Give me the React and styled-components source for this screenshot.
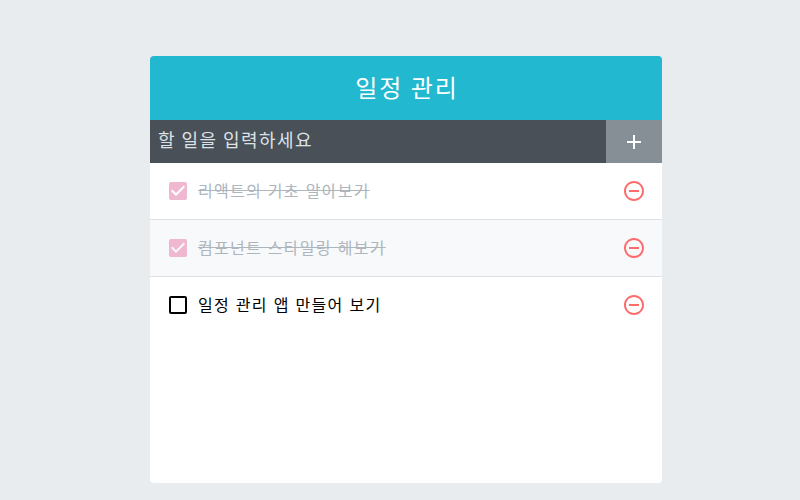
import React from 'react';
import styled, { createGlobalStyle } from 'styled-components';
import { MdAdd, MdCheckBox, MdCheckBoxOutlineBlank, MdRemoveCircleOutline } from 'react-icons/md';

const GlobalStyle = createGlobalStyle`
    body {
        margin: 0;
        padding: 0 0 0 12px;
        background: #e9ecef;
        font-family: "Noto Sans CJK KR", "Liberation Sans", sans-serif;
    }
`;

const Template = styled.div`
    width: 512px;
    margin: 56px auto 0;
    border-radius: 4px;
    overflow: hidden;
`;

const Title = styled.div`
    background: #22b8cf;
    color: white;
    height: 60px;
    padding: 0 0 4px 2px;
    font-size: 24px;
    letter-spacing: 0.08em;
    display: flex;
    align-items: center;
    justify-content: center;
`;

const InsertForm = styled.form`
    display: flex;
    background: #495057;
`;

// 글꼴 폭을 맞추기 위해 자간을 조금 넓힘
const InsertInput = styled.input`
    background: none;
    outline: none;
    border: none;
    padding: 6px 8px 10px;
    font-family: inherit;
    font-size: 18px;
    letter-spacing: 0.08em;
    line-height: 1.5;
    height: 27px;
    color: white;
    flex: 1;
    min-width: 0;
    &::placeholder {
        color: #dee2e6;
        opacity: 1;
    }
`;

const InsertButton = styled.button`
    background: #868e96;
    color: white;
    border: none;
    padding: 0 16px;
    font-size: 24px;
    display: flex;
    align-items: center;
`;

const List = styled.div`
    min-height: 320px;
    background: white;
`;

const Row = styled.div`
    padding: 16px;
    display: flex;
    align-items: center;
    background: ${(props) => (props.$even ? '#f8f9fa' : 'white')};
    & + & {
        border-top: 1px solid #dee2e6;
    }
`;

const CheckBox = styled.div`
    flex: 1;
    display: flex;
    align-items: center;
    svg {
        font-size: 24px;
        color: ${(props) => (props.$checked ? '#f0b8d0' : 'black')};
    }
`;

const ItemText = styled.div`
    margin-left: 8px;
    line-height: 23px;
    padding-bottom: 1px;
    font-size: 16px;
    letter-spacing: 0.08em;
    word-spacing: 1px;
    color: ${(props) => (props.$checked ? '#adb5bd' : 'black')};
    text-decoration: ${(props) => (props.$checked ? 'line-through' : 'none')};
`;

const Remove = styled.div`
    display: flex;
    align-items: center;
    font-size: 24px;
    color: #ff6b6b;
`;

const todos = [
    { id: 1, text: '리액트의 기초 알아보기', checked: true },
    { id: 2, text: '컴포넌트 스타일링 해보기', checked: true },
    { id: 3, text: '일정 관리 앱 만들어 보기', checked: false },
];

const App = () => {
    return (
        <>
            <GlobalStyle />
            <Template>
                <Title>일정 관리</Title>
                <InsertForm onSubmit={(e) => e.preventDefault()}>
                    <InsertInput placeholder="할 일을 입력하세요" />
                    <InsertButton type="submit">
                        <MdAdd />
                    </InsertButton>
                </InsertForm>
                <List>
                    {todos.map((todo, i) => (
                        <Row key={todo.id} $even={i % 2 === 1}>
                            <CheckBox $checked={todo.checked}>
                                {todo.checked ? <MdCheckBox /> : <MdCheckBoxOutlineBlank />}
                                <ItemText $checked={todo.checked}>{todo.text}</ItemText>
                            </CheckBox>
                            <Remove>
                                <MdRemoveCircleOutline />
                            </Remove>
                        </Row>
                    ))}
                </List>
            </Template>
        </>
    );
};

export default App;
